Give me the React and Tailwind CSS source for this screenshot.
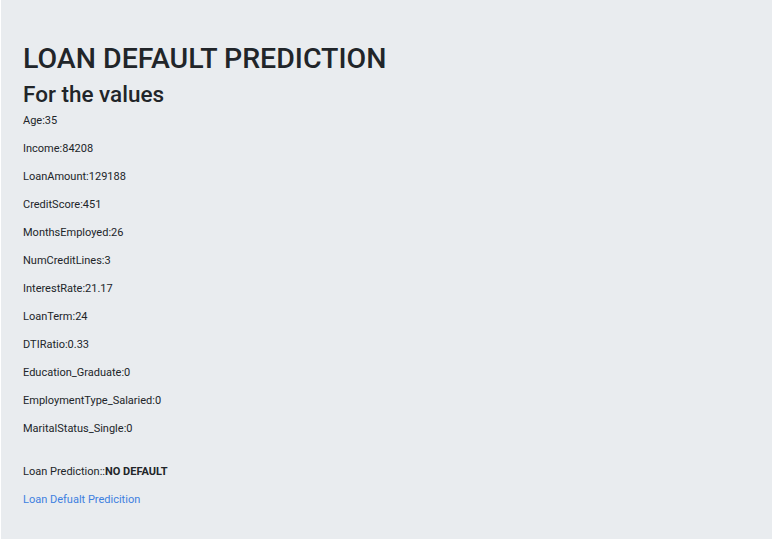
import React from 'react';

const values = [
  ['Age', '35'],
  ['Income', '84208'],
  ['LoanAmount', '129188'],
  ['CreditScore', '451'],
  ['MonthsEmployed', '26'],
  ['NumCreditLines', '3'],
  ['InterestRate', '21.17'],
  ['LoanTerm', '24'],
  ['DTIRatio', '0.33'],
  ['Education_Graduate', '0'],
  ['EmploymentType_Salaried', '0'],
  ['MaritalStatus_Single', '0'],
];

const App = () => {
  return (
    <div
      className="min-h-screen bg-[#e9ecef] border-l border-white pl-[22px] pt-[39px] text-[#212529]"
      style={{ fontFamily: 'Roboto, "Open Sans", sans-serif' }}
    >
      <h1 className="h-[40px] flex items-center text-[28.5px] font-medium">LOAN DEFAULT PREDICTION</h1>
      <h3 className="h-[28px] pt-[3px] flex items-center text-[22.5px] font-medium">For the values</h3>

      {values.map(([name, val]) => (
        <p key={name} className="h-[28px] flex items-center text-[11px]">
          {name}:{val}
        </p>
      ))}

      <p className="mt-[15px] h-[28px] flex items-center text-[11px]">
        Loan Prediction::<b className="font-bold">NO DEFAULT</b>
      </p>
      <a href="#" className="h-[28px] flex items-center text-[11px] text-[#3d7fe0]">
        Loan Defualt Predicition
      </a>
    </div>
  );
};

export default App;
